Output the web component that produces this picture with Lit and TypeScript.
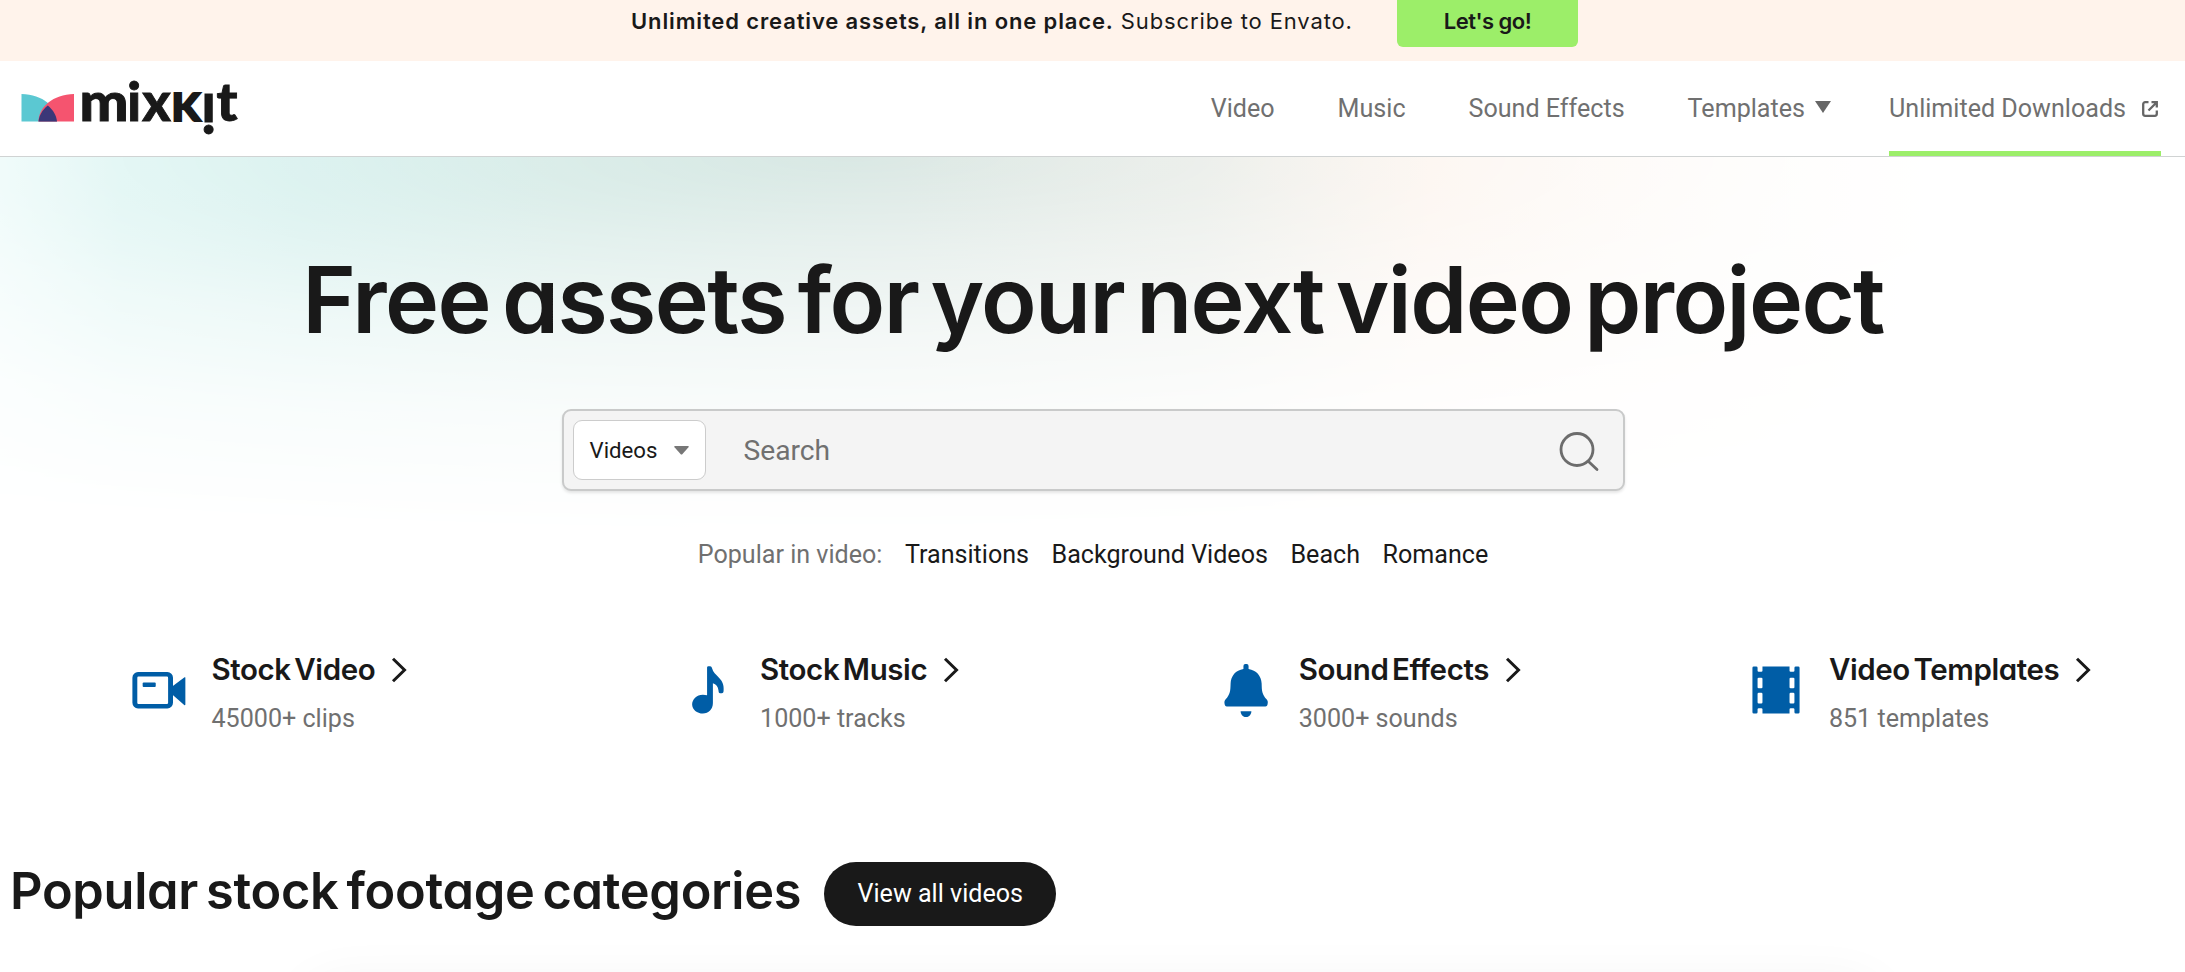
import { LitElement, html, svg, css } from 'lit'
import { customElement, property } from 'lit/decorators.js'

const icons = {
  video: svg`<path fill-rule="evenodd" d="M3 4.3h12.6a2.4 2.4 0 0 1 2.4 2.4v10.800a2.400 2.400 0 0 1-2.400 2.400H3A2.400 2.400 0 0 1 .6 17.500V6.700A2.400 2.400 0 0 1 3 4.300zM3.200 6.200a.5.5 0 0 0-.5.5v10.800a.5.5 0 0 0 .5.5h12.200a.5.5 0 0 0 .5-.5V6.700a.5.5 0 0 0-.5-.5z"/><rect x="5" y="8.800" width="5.600" height="1.900" rx=".4"/><path d="M17.800 10.400 22.800 6.600a.3.3 0 0 1 .5.3v11.200a.3.3 0 0 1-.5.3L17.800 14z"/>`,
  music: svg`<path d="M11.600 2.400c0-.4.300-.6.700-.6h.6c.5 0 .6.300.8.800.5 1.900 1.600 2.700 3 4.100 1.600 1.600 2.100 3.200 2 5.200 0 1.100-.2 1.500-.8 1.500h-.7c-.6 0-.6-.5-.7-1.200-.2-1.800-1-2.700-2.400-3.100v8.500c0 2.700-1.800 4.500-4.300 4.500S5.200 20.300 5.200 18.200s1.900-4.200 4.600-4.200c.7 0 1.200.1 1.800.3z"/>`,
  bell: svg`<path d="M10.900 1.700a.8.800 0 0 1 .8-.8h.6a.8.800 0 0 1 .8.800v1.300c3.300.5 5.500 3 5.600 6.200.1 3.200.1 4.600 2.200 6.900.6.700.5 1.500.3 2.200-.2.600-.7.800-1.300.8H4.200c-.6 0-1.100-.2-1.300-.8-.2-.7-.3-1.500.3-2.200 2.100-2.300 2.100-3.700 2.200-6.900.1-3.200 2.200-5.700 5.500-6.200z"/><path d="M9.700 21.100h4.600c0 1.400-1 2.500-2.300 2.500s-2.300-1.100-2.300-2.500z"/>`,
  film: svg`<path fill-rule="evenodd" d="M1.900 2.500q0-.6.6-.6h1q.6 0 .6.6v1.200q0 .5.5.5h1.100q.5 0 .5-.5V1.900h11.600v1.800q0 .5.5.5h1.100q.5 0 .5-.5V2.500q0-.6.6-.6h1q.6 0 .6.6v19q0 .6-.6.6h-1q-.6 0-.6-.6v-1.200q0-.5-.5-.5h-1.100q-.5 0-.5.5v1.800H6.200v-1.800q0-.5-.5-.5H4.600q-.5 0-.5.5v1.200q0 .6-.6.6h-1q-.6 0-.6-.6zM4.600 6.700q-.5 0-.5.5v3.600q0 .5.5.5h1.100q.5 0 .5-.5V7.200q0-.5-.5-.5zM4.600 13.200q-.5 0-.5.5v3.600q0 .5.5.5h1.100q.5 0 .5-.5v-3.600q0-.5-.5-.5zM18.300 6.700q-.5 0-.5.5v3.600q0 .5.5.5h1.100q.5 0 .5-.5V7.200q0-.5-.5-.5zM18.300 13.200q-.5 0-.5.5v3.600q0 .5.5.5h1.100q.5 0 .5-.5v-3.600q0-.5-.5-.5z"/>`,
}

@customElement('mix-category')
export class MixCategory extends LitElement {
  @property({type: String}) icon = 'video';
  @property({type: String}) heading = '';
  @property({type: String}) count = '';

  static styles = css`
    :host {
      display: flex;
      justify-content: center;
    }

    .icon {
      width: 56px;
      height: 56px;
      margin: 8px 24.5px 0 0;
      fill: #005da6;
    }

    .heading {
      display: flex;
      align-items: center;
      gap: 16px;
      font: 600 29.5px/30px Inter, sans-serif;
      font-feature-settings: 'cv11';
      letter-spacing: -0.4px;
      word-spacing: -3.5px;
      color: #191919;
    }

    .heading svg {
      width: 16px;
      height: 26px;
      margin-top: 2px;
      fill: none;
      stroke: #191919;
      stroke-width: 3;
    }

    .count {
      margin-top: 20px;
      font: 400 25.1px/30px Roboto, sans-serif;
      color: #707070;
    }
  `

  render() {
    return html`
      <svg class="icon" viewBox="0 0 24 24">${icons[this.icon]}</svg>
      <div>
        <div class="heading">
          <span>${this.heading}</span>
          <svg viewBox="0 0 16 26"><path d="M2 1.800 13.500 13 2 24.200"/></svg>
        </div>
        <div class="count">${this.count}</div>
      </div>
    `
  }
}

@customElement('app-root')
export class AppRoot extends LitElement {
  @property({type: Array}) tags = ['Transitions', 'Background Videos', 'Beach', 'Romance'];
  @property({type: Array}) categories = [
    { icon: 'video', heading: 'Stock Video', count: '45000+ clips' },
    { icon: 'music', heading: 'Stock Music', count: '1000+ tracks' },
    { icon: 'bell', heading: 'Sound Effects', count: '3000+ sounds' },
    { icon: 'film', heading: 'Video Templates', count: '851 templates' },
  ];

  static styles = css`
    :host {
      display: block;
      height: 972px;
      overflow: hidden;
      background: #fff;
      color: #191919;
      font: 400 25.1px/30px Roboto, sans-serif;
    }

    .banner {
      box-sizing: border-box;
      display: flex;
      height: 61px;
      padding-left: 631px;
      background: #fff3eb;
      overflow: hidden;
      font: 400 22px/54px Inter, sans-serif;
      letter-spacing: 0.87px;
      white-space: nowrap;
    }

    .banner p, .banner a {
      height: 53px;
      margin: -6px 0 0;
    }

    .banner p {
      width: 766px;
    }

    .banner b {
      font-weight: 600;
    }

    .banner a {
      width: 181px;
      border-radius: 6px;
      background: #9cee69;
      font-weight: 600;
      letter-spacing: -0.5px;
      text-align: center;
    }

    .header {
      box-sizing: border-box;
      display: flex;
      justify-content: space-between;
      height: 96px;
      padding: 0 24px 0 20px;
      border-bottom: 1.5px solid #d0d3d3;
    }

    .logo {
      width: 220px;
      height: 95px;
    }

    .nav {
      display: flex;
      gap: 63px;
      line-height: 96px;
      color: #707070;
    }

    .nav .drop {
      display: flex;
      align-items: center;
      gap: 10px;
      margin-right: -5px;
    }

    .drop svg {
      width: 16px;
      height: 12px;
      margin-top: -3px;
      fill: #666;
    }

    .nav .current {
      box-sizing: border-box;
      display: flex;
      align-items: center;
      gap: 15px;
      height: 95px;
      padding: 0 2px 0 0;
      box-shadow: inset 0 -5px #9cee69;
    }

    .current svg {
      width: 18px;
      height: 18px;
      fill: none;
      stroke: #666;
      stroke-width: 2.3;
    }

    .hero {
      position: relative;
      display: flex;
      flex-direction: column;
      align-items: center;
      padding: 93px 0 0 1px;
    }

    .glow {
      position: absolute;
      inset: 0 0 auto;
      height: 390px;
      background: linear-gradient(90deg, #dcf6f4 0, #c8eeea 120px, #c6eae6 300px, #d1e8e3 560px, #dbe8e4 900px, #e6eae5 1200px, #fbf1e9 1430px, #fcf8f4 1680px, #fff 1950px);
      mask-image: radial-gradient(ellipse 2200px 380px at 850px 0, #000 0, rgba(0, 0, 0, 0.62) 24%, rgba(0, 0, 0, 0.3) 48%, rgba(0, 0, 0, 0.12) 70%, transparent 100%);
    }

    h1, h2 {
      margin: 0;
      font-family: Inter, sans-serif;
      font-weight: 600;
      font-feature-settings: 'cv11';
      white-space: nowrap;
    }

    h1 {
      position: relative;
      font-size: 91.5px;
      line-height: 100px;
      letter-spacing: -1.6px;
      word-spacing: -9.5px;
    }

    .search {
      position: relative;
      box-sizing: border-box;
      display: flex;
      align-items: center;
      width: 1063px;
      height: 82px;
      margin-top: 59px;
      padding: 0 23px 0 9px;
      border: 2px solid #c9caca;
      border-radius: 9px;
      background: #f4f4f4;
      box-shadow: 0 2px 3px rgba(0, 0, 0, 0.1);
    }

    .select {
      box-sizing: border-box;
      display: flex;
      align-items: center;
      justify-content: space-between;
      width: 133px;
      height: 60px;
      padding: 0 16px 0 16px;
      border: 1.5px solid #ccc;
      border-radius: 9px;
      background: #fff;
      font-size: 22.2px;
    }

    .select svg {
      width: 15px;
      height: 9px;
      fill: #777;
    }

    .placeholder {
      flex: 1;
      padding: 1px 0 0 38px;
      font-size: 28.2px;
      color: #707070;
    }

    .lens {
      width: 42px;
      height: 42px;
      margin-top: 3px;
      fill: none;
      stroke: #6c6c6c;
      stroke-width: 2.8;
      stroke-linecap: round;
    }

    .tags {
      position: relative;
      display: flex;
      gap: 22.5px;
      margin-top: 49px;
    }

    .tags span {
      color: #707070;
    }

    .categories {
      display: grid;
      grid-template-columns: repeat(4, 1fr);
      margin: 84px -10px 0 -6px;
    }

    .section {
      display: flex;
      align-items: center;
      gap: 23px;
      margin-top: 128px;
      padding-left: 10px;
    }

    h2 {
      font-size: 50.5px;
      line-height: 58px;
      letter-spacing: -0.3px;
      word-spacing: -4.5px;
      margin-top: -6px;
    }

    .button {
      width: 232px;
      height: 64px;
      border-radius: 32px;
      background: #191919;
      color: #fff;
      line-height: 64px;
      text-align: center;
    }

    .shade {
      height: 80px;
      margin: 60px 310px 0;
      border-radius: 20px;
      box-shadow: 0 0 56px rgba(0, 0, 0, 0.06);
    }
  `

  render() {
    return html`
      <div class="banner">
        <p><b>Unlimited creative assets, all in one place.</b> Subscribe to Envato.</p>
        <a>Let's go!</a>
      </div>
      <div class="header">
        <svg class="logo" viewBox="20 61 220 95">
          <path fill="#5bc8d2" d="M21.500 94C43 94.500 57 107 57 121.500H21.500z"/>
          <path fill="#f5546f" d="M74 94C53 94.500 38.500 107 38.500 121.500H74z"/>
          <path fill="#3b3778" d="M47.800 105.500C53.500 110 56.500 116 57 121.500H38.500C39 116 42 110 47.800 105.500z"/>
          <g fill="#191919" stroke="#191919" stroke-width=".9" font-family="Lato, sans-serif" font-weight="900" font-size="53">
            <text x="79.500" y="121.300" textLength="49" lengthAdjust="spacingAndGlyphs">m</text>
            <text x="134.200" y="121.300" text-anchor="middle">i</text>
            <text x="142.300" y="121.300" textLength="28.500" lengthAdjust="spacingAndGlyphs">x</text>
            <text x="171.500" y="121.200" font-size="38" stroke-width="2" textLength="29" lengthAdjust="spacingAndGlyphs">K</text>
            <text transform="rotate(180 208.500 107.800)" x="208.500" y="121.300" text-anchor="middle">i</text>
            <text x="216.500" y="121.300" textLength="21" lengthAdjust="spacingAndGlyphs">t</text>
          </g>
        </svg>
        <div class="nav">
          <a>Video</a>
          <a>Music</a>
          <a>Sound Effects</a>
          <a class="drop">Templates <svg viewBox="0 0 16 12"><path d="M0 0h16L8 12z"/></svg></a>
          <a class="current">Unlimited Downloads
            <svg viewBox="0 0 18 18"><path d="M7.500 2.200H4.200a2 2 0 0 0-2 2v9.600a2 2 0 0 0 2 2h9.600a2 2 0 0 0 2-2v-3.300M10.500 2.200h5.300v5.300M15.800 2.200 7.500 10.500"/></svg>
          </a>
        </div>
      </div>
      <div class="hero">
        <div class="glow"></div>
        <h1>Free assets for your next video project</h1>
        <div class="search">
          <div class="select">Videos <svg viewBox="0 0 15 9"><path d="M1 0h13q1.500 0 .5 1.200L8.500 8q-1 1-2 0L.5 1.200Q-.5 0 1 0z"/></svg></div>
          <div class="placeholder">Search</div>
          <svg class="lens" viewBox="0 0 42 42"><circle cx="19" cy="18.500" r="16"/><path d="M30.500 30.500 39 38.500"/></svg>
        </div>
        <div class="tags">
          <span>Popular in video:</span>
          ${this.tags.map(tag => html`<a>${tag}</a>`)}
        </div>
      </div>
      <div class="categories">
        ${this.categories.map(c => html`
          <mix-category icon=${c.icon} heading=${c.heading} count=${c.count}></mix-category>
        `)}
      </div>
      <div class="section">
        <h2>Popular stock footage categories</h2>
        <a class="button">View all videos</a>
      </div>
      <div class="shade"></div>
    `
  }
}
